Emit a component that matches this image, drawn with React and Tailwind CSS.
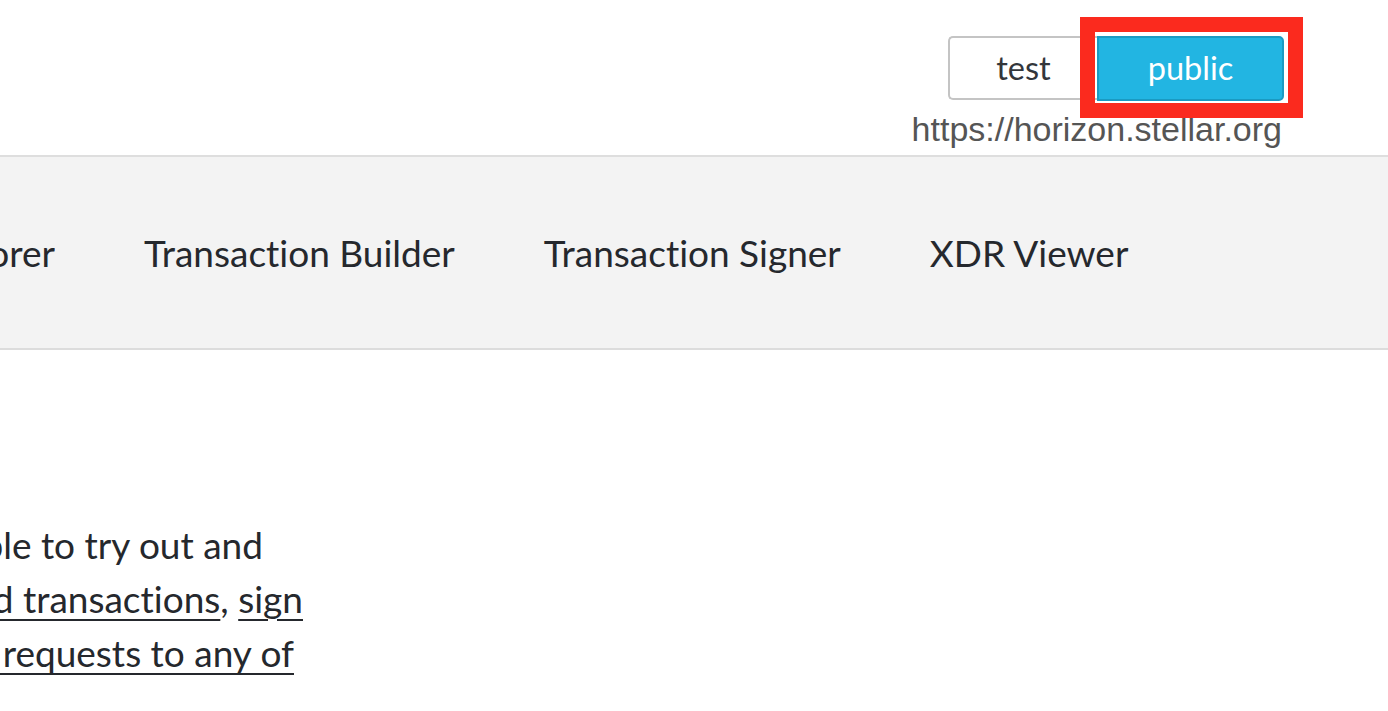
export default function App() {
  const font = { fontFamily: 'Lato, "Open Sans", sans-serif' };
  return (
    <div className="w-[1388px] h-[711px] bg-white overflow-hidden text-[#2b2e33] [font-variant-ligatures:none]" style={font}>
      <header className="h-[157px] border-b-2 border-[#dedede] flex justify-end pr-[104px] pt-[36px]">
        <div className="flex flex-col items-end">
          <div className="flex">
            <button className="w-[149px] h-[64px] border-2 border-r-0 border-[#c4c4c4] rounded-l-[5px] bg-white text-[32.5px] text-[#33363b] leading-none flex items-center justify-center">
              test
            </button>
            <div className="relative">
              <button className="w-[187px] h-[65px] border-2 border-[#1a9ac2] rounded-r-[5px] bg-[#22b5e2] text-[32.5px] text-white leading-none flex items-center justify-center">
                public
              </button>
              <div className="absolute left-[-17px] top-[-19px] right-[-19px] bottom-[-17px] border-[15px] border-[#fb2a1e] pointer-events-none" />
            </div>
          </div>
          <div className="mt-[10px] text-[34px] leading-[36px] text-[#555555] mr-[2px]" style={{ fontFamily: '"Liberation Sans", Arial, sans-serif' }}>
            https://horizon.stellar.org
          </div>
        </div>
      </header>
      <nav className="h-[193px] bg-[#f3f3f3] border-b-2 border-[#dcdcdc] flex items-center">
        <div className="flex items-center gap-[89px] text-[37px] text-[#25282d] whitespace-nowrap">
          <div className="w-[55px] overflow-hidden flex justify-end">
            <span className="shrink-0">Endpoint Explorer</span>
          </div>
          <span>Transaction Builder</span>
          <span>Transaction Signer</span>
          <span>XDR Viewer</span>
        </div>
      </nav>
      <div className="pt-[168px] text-[37px] leading-[54px] text-[#25282d] whitespace-nowrap">
        <div className="w-[263px] overflow-hidden flex justify-end">
          <span className="shrink-0">enables people to try out and</span>
        </div>
        <div className="w-[303px] overflow-hidden flex justify-end">
          <span className="shrink-0">
            <span className="underline underline-offset-[6px] decoration-2">can build transactions</span>, <span className="underline underline-offset-[6px] decoration-2">sign</span>
          </span>
        </div>
        <div className="w-[294px] overflow-hidden flex justify-end">
          <span className="shrink-0 underline underline-offset-[6px] decoration-2">make requests to any of</span>
        </div>
      </div>
    </div>
  );
}
